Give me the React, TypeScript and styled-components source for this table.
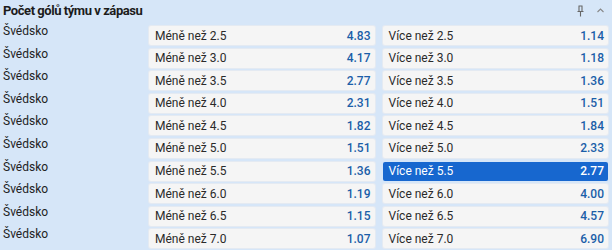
import React from "react";
import styled, { createGlobalStyle } from "styled-components";

const Global = createGlobalStyle`
  html, body { margin: 0; padding: 0; background: #d6e6f8; }
  body { font-family: Roboto, "Liberation Sans", Arial, sans-serif; }
`;

const Panel = styled.div`
  width: 612px;
  height: 250px;
  background: #d6e6f8;
  overflow: hidden;
  box-sizing: border-box;
`;

const Header = styled.div`
  display: flex;
  align-items: center;
  height: 21px;
  padding: 0 7px 0 3px;
`;

const Title = styled.div`
  flex: 1;
  font-size: 13px;
  font-weight: 700;
  letter-spacing: -0.45px;
  color: #1c1c1c;
`;

const Icons = styled.div`
  display: flex;
  align-items: center;
  gap: 11px;
`;

const Rows = styled.div`
  display: flex;
  flex-direction: column;
  gap: 3.6px;
  padding: 5px 4px 0 3px;
`;

const Row = styled.div`
  display: grid;
  grid-template-columns: 138px 1fr 1fr;
  column-gap: 8px;
  align-items: center;
  height: 19px;
`;

const Team = styled.div`
  font-size: 12px;
  color: #222;
  align-self: start;
  margin-top: -2px;
`;

const Odd = styled.div<{ $active?: boolean }>`
  display: flex;
  align-items: center;
  justify-content: space-between;
  height: 19px;
  padding: 0 4px 0 6px;
  border-radius: 2px;
  background: ${(p) => (p.$active ? "#1767cf" : "#f5f5f5")};
  box-shadow: ${(p) => (p.$active ? "none" : "0 0 0 1px #e4eaf2")};
  font-size: 12px;
  color: ${(p) => (p.$active ? "#fff" : "#2a2a2a")};
`;

const Value = styled.span<{ $active?: boolean }>`
  color: ${(p) => (p.$active ? "#fff" : "#1b5ea8")};
  font-weight: 500;
`;

const data: [string, string, string, string][] = [
  ["2.5", "4.83", "2.5", "1.14"],
  ["3.0", "4.17", "3.0", "1.18"],
  ["3.5", "2.77", "3.5", "1.36"],
  ["4.0", "2.31", "4.0", "1.51"],
  ["4.5", "1.82", "4.5", "1.84"],
  ["5.0", "1.51", "5.0", "2.33"],
  ["5.5", "1.36", "5.5", "2.77"],
  ["6.0", "1.19", "6.0", "4.00"],
  ["6.5", "1.15", "6.5", "4.57"],
  ["7.0", "1.07", "7.0", "6.90"],
];

export default function App() {
  return (
    <Panel>
      <Global />
      <Header>
        <Title>Počet gólů týmu v zápasu</Title>
        <Icons>
          <svg width="9" height="12" viewBox="0 0 9 12" fill="none" stroke="#666" strokeWidth="1.1">
            <path d="M2.5 1h4M3 1v5M6 1v5M1.5 6.5h6M4.5 6.5v5" />
          </svg>
          <svg width="9" height="7" viewBox="0 0 9 7" fill="none" stroke="#888" strokeWidth="1.1">
            <path d="M1.5 5l3-3 3 3" />
          </svg>
        </Icons>
      </Header>
      <Rows>
        {data.map((d, i) => {
          const activeRight = i === 6;
          return (
            <Row key={i}>
              <Team>Švédsko</Team>
              <Odd>
                <span>Méně než {d[0]}</span>
                <Value>{d[1]}</Value>
              </Odd>
              <Odd $active={activeRight}>
                <span>Více než {d[2]}</span>
                <Value $active={activeRight}>{d[3]}</Value>
              </Odd>
            </Row>
          );
        })}
      </Rows>
    </Panel>
  );
}
